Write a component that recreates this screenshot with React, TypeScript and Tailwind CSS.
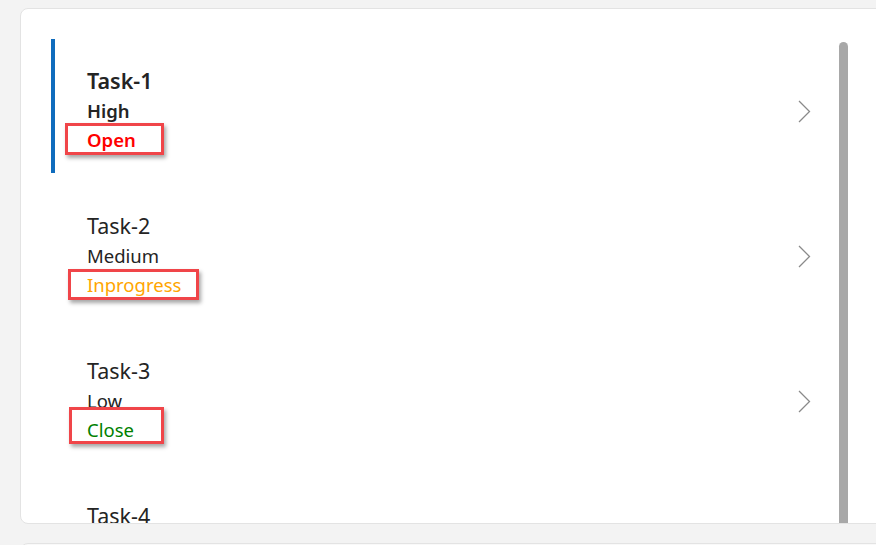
import React from "react";

type Task = {
  title: string;
  priority: string;
  status: string;
  statusClass: string;
  box: string;
};

const tasks: Task[] = [
  {
    title: "Task-1",
    priority: "High",
    status: "Open",
    statusClass: "text-[#ff0000]",
    box: "-left-[22px] -top-[2px] w-[99px] h-[32px]",
  },
  {
    title: "Task-2",
    priority: "Medium",
    status: "Inprogress",
    statusClass: "text-[#ffa500]",
    box: "-left-[19px] -top-[1px] w-[131px] h-[31px]",
  },
  {
    title: "Task-3",
    priority: "Low",
    status: "Close",
    statusClass: "text-[#008000]",
    box: "-left-[18px] -top-[8px] w-[95px] h-[37px]",
  },
  {
    title: "Task-4",
    priority: "Low",
    status: "Open",
    statusClass: "text-[#ff0000]",
    box: "",
  },
];

function Chevron() {
  return (
    <svg width="13" height="23" viewBox="0 0 13 23" fill="none" aria-hidden="true">
      <path d="M1 1 L11.5 11.5 L1 22" stroke="#8a8a8a" strokeWidth="1.3" />
    </svg>
  );
}

function TaskRow({ task, selected }: { task: Task; selected: boolean }) {
  return (
    <div className="flex h-[134px] w-[760px] shrink-0">
      <div className={selected ? "w-[4px] bg-[#0f6cbd]" : "w-[4px]"} />
      <div className="flex flex-1 flex-col pl-[32px] pt-[27px]">
        <div
          className={
            selected
              ? "text-[21.5px] leading-[30px] font-semibold text-[#242424]"
              : "text-[21.5px] leading-[30px] text-[#242424]"
          }
        >
          {task.title}
        </div>
        <div
          className={
            selected
              ? "text-[18.5px] leading-[29px] font-semibold text-[#242424]"
              : "text-[18.5px] leading-[29px] text-[#242424]"
          }
        >
          {task.priority}
        </div>
        <div className="relative text-[18.5px] leading-[29px]">
          <span className={selected ? `font-semibold ${task.statusClass}` : task.statusClass}>
            {task.status}
          </span>
          {task.box && (
            <div
              className={`absolute border-[3px] border-[#f04549] shadow-[2px_3px_4px_rgba(0,0,0,0.35)] ${task.box}`}
            />
          )}
        </div>
      </div>
      <div className="flex items-center pt-[10px]">
        <Chevron />
      </div>
    </div>
  );
}

export default function App() {
  return (
    <div
      className="flex h-[545px] w-[876px] flex-col overflow-hidden bg-[#f3f3f3]"
      style={{ fontFamily: '"Noto Sans", "Open Sans", sans-serif' }}
    >
      <div className="ml-[20px] mt-[8px] flex h-[516px] w-[900px] shrink-0 overflow-hidden rounded-lg border border-[#e3e3e3] bg-white">
        <div className="flex w-[818px] flex-col gap-[11px] pl-[30px] pt-[30px]">
          {tasks.map((task, i) => (
            <TaskRow key={task.title} task={task} selected={i === 0} />
          ))}
        </div>
        <div className="mt-[33px] w-[9px] rounded-t-full bg-[#a8a8a8]" />
      </div>
      <div className="ml-[20px] mt-[19px] h-[40px] w-[900px] shrink-0 rounded-t-lg border border-[#e3e3e3] bg-[#f9f9f9]" />
    </div>
  );
}
